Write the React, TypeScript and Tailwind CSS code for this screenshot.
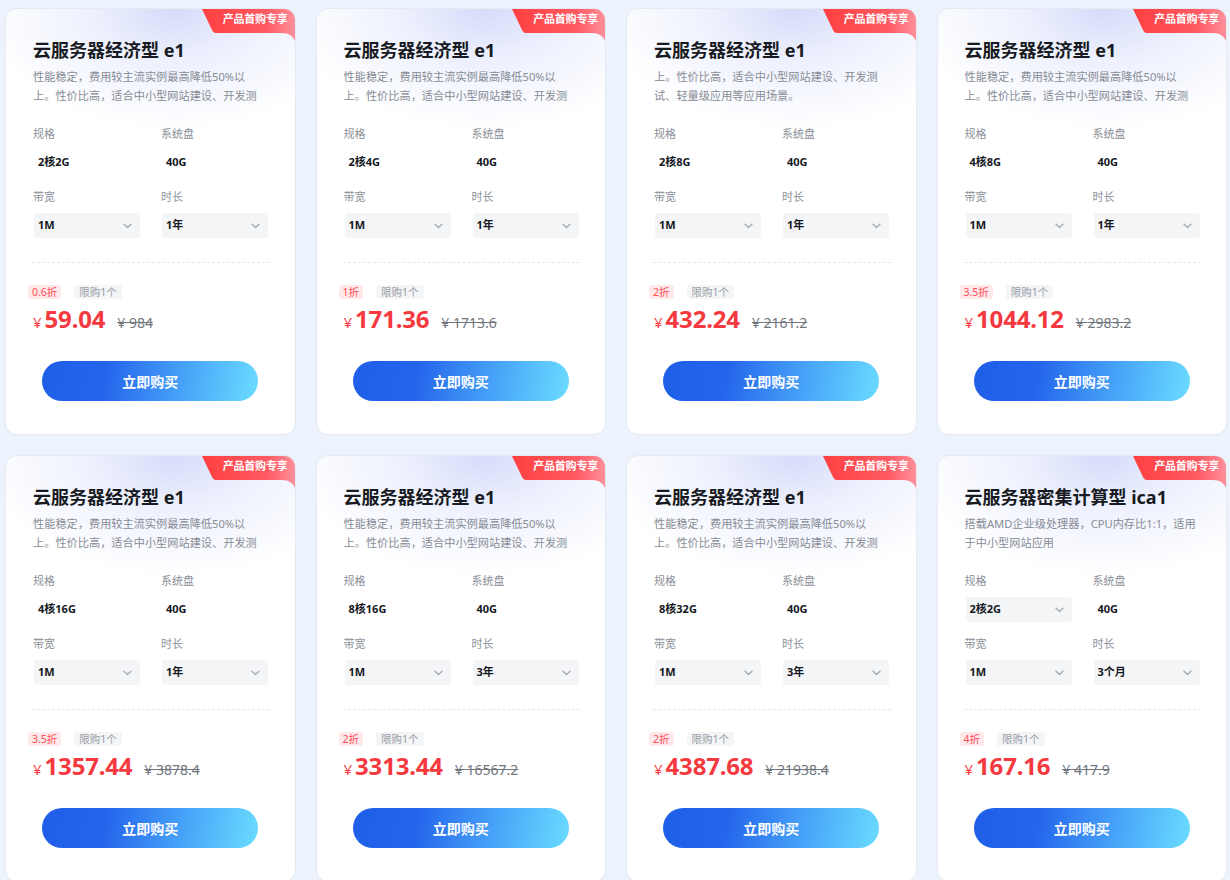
const descA = ['性能稳定，费用较主流实例最高降低50%以', '上。性价比高，适合中小型网站建设、开发测'];
const descB = ['上。性价比高，适合中小型网站建设、开发测', '试、轻量级应用等应用场景。'];
const descC = ['搭载AMD企业级处理器，CPU内存比1:1，适用', '于中小型网站应用'];

type Product = {
  title: string;
  desc: string[];
  spec: string;
  specSelect?: boolean;
  disk: string;
  bw: string;
  term: string;
  off: string;
  price: string;
  orig: string;
};

const products: Product[] = [
  { title: '云服务器经济型 e1', desc: descA, spec: '2核2G', disk: '40G', bw: '1M', term: '1年', off: '0.6折', price: '59.04', orig: '984' },
  { title: '云服务器经济型 e1', desc: descA, spec: '2核4G', disk: '40G', bw: '1M', term: '1年', off: '1折', price: '171.36', orig: '1713.6' },
  { title: '云服务器经济型 e1', desc: descB, spec: '2核8G', disk: '40G', bw: '1M', term: '1年', off: '2折', price: '432.24', orig: '2161.2' },
  { title: '云服务器经济型 e1', desc: descA, spec: '4核8G', disk: '40G', bw: '1M', term: '1年', off: '3.5折', price: '1044.12', orig: '2983.2' },
  { title: '云服务器经济型 e1', desc: descA, spec: '4核16G', disk: '40G', bw: '1M', term: '1年', off: '3.5折', price: '1357.44', orig: '3878.4' },
  { title: '云服务器经济型 e1', desc: descA, spec: '8核16G', disk: '40G', bw: '1M', term: '3年', off: '2折', price: '3313.44', orig: '16567.2' },
  { title: '云服务器经济型 e1', desc: descA, spec: '8核32G', disk: '40G', bw: '1M', term: '3年', off: '2折', price: '4387.68', orig: '21938.4' },
  { title: '云服务器密集计算型 ica1', desc: descC, spec: '2核2G', specSelect: true, disk: '40G', bw: '1M', term: '3个月', off: '4折', price: '167.16', orig: '417.9' },
];

function Chevron() {
  return (
    <svg width="9" height="6" viewBox="0 0 9 6" fill="none">
      <path d="M1 1.2l3.5 3.3L8 1.2" stroke="#a3a8b0" strokeWidth="1.3" strokeLinecap="round" strokeLinejoin="round" />
    </svg>
  );
}

function Field({ label, value, select }: { label: string; value: string; select?: boolean }) {
  return (
    <div>
      <div className="text-[11px] leading-4 text-[#8b9099]">{label}</div>
      <div
        className={`mt-2 ml-px w-[106px] h-[25px] rounded-[3px] pl-[4px] pr-[8px] flex items-center justify-between ${
          select ? 'bg-[#f3f5f6]' : ''
        }`}
      >
        <span className="text-[11px] font-bold text-[#15181e]">{value}</span>
        {select && <Chevron />}
      </div>
    </div>
  );
}

function Ribbon() {
  return (
    <div className="absolute top-0 right-0 w-[93px] h-[32px]">
      <svg width="93" height="32" viewBox="0 0 93 32" className="absolute inset-0">
        <defs>
          <linearGradient id="rb" x1="0" y1="0" x2="1" y2="0">
            <stop offset="0%" stopColor="#ff4040" />
            <stop offset="70%" stopColor="#ff5a63" />
            <stop offset="100%" stopColor="#ff909c" />
          </linearGradient>
        </defs>
        <path d="M0 0H93V32C91 27 87 24 80 24H14C12 24 11 23 10 21Z" fill="url(#rb)" />
      </svg>
      <span className="absolute right-[7px] top-[3px] text-[11px] leading-[14px] font-bold text-white tracking-[-0.2px]">
        产品首购专享
      </span>
    </div>
  );
}

function Card({ p }: { p: Product }) {
  return (
    <div className="relative overflow-hidden rounded-xl border border-[#e4e9f2] bg-[radial-gradient(ellipse_190px_120px_at_58%_0,#d5dcfa_0%,#eef1fd_45%,#ffffff_100%)] pl-[27px] pr-[22px] pt-[29px] pb-[33px]">
      <Ribbon />
      <div className="text-[18px] leading-6 font-bold text-[#171a21]">{p.title}</div>
      <div className="mt-[5px] text-[11.2px] leading-[19px] text-[#878c95]">
        {p.desc.map((l, i) => (
          <div key={i} className="whitespace-nowrap overflow-hidden">
            {l}
          </div>
        ))}
      </div>
      <div className="mt-[21px] grid grid-cols-[128px_128px] gap-y-[14px]">
        <Field label="规格" value={p.spec} select={p.specSelect} />
        <Field label="系统盘" value={p.disk} />
        <Field label="带宽" value={p.bw} select />
        <Field label="时长" value={p.term} select />
      </div>
      <div className="mt-6 mr-[3px] -ml-px border-t border-dashed border-[#e3e6ea]" />
      <div className="mt-[22px] -ml-[5px] flex items-center gap-[13px]">
        <span className="h-[14px] px-[4px] rounded-[3px] bg-[#ffe8ea] text-[10.5px] leading-[14px] text-[#ff4d55]">{p.off}</span>
        <span className="h-[14px] px-[5px] rounded-[3px] bg-[#f4f5f7] text-[10.5px] leading-[14px] text-[#979ca5]">限购1个</span>
      </div>
      <div className="mt-[4px] flex items-baseline h-[32px]">
        <span className="text-[15px] text-[#f5393f] mr-[3px]">¥</span>
        <span className="text-[24px] leading-8 font-bold text-[#f5393f] tracking-[-0.2px]">{p.price}</span>
        <span className="ml-[12px] text-[14px] text-[#70757e] line-through">¥ {p.orig}</span>
      </div>
      <div className="mt-[26px] -ml-[5px] flex justify-center">
        <button className="w-[216px] h-10 rounded-full bg-[linear-gradient(100deg,#1f5fe8_0%,#2565ec_30%,#47a3f8_65%,#6adcff_100%)] text-white text-[14px] font-bold">
          立即购买
        </button>
      </div>
    </div>
  );
}

export default function App() {
  return (
    <div className="min-h-[880px] bg-[#edf3fd] pl-[5px] pr-[3px] pt-2 font-['Noto_Sans','Noto_Sans_CJK_SC',sans-serif]">
      <div className="grid grid-cols-4 gap-5">
        {products.map((p, i) => (
          <Card key={i} p={p} />
        ))}
      </div>
    </div>
  );
}
